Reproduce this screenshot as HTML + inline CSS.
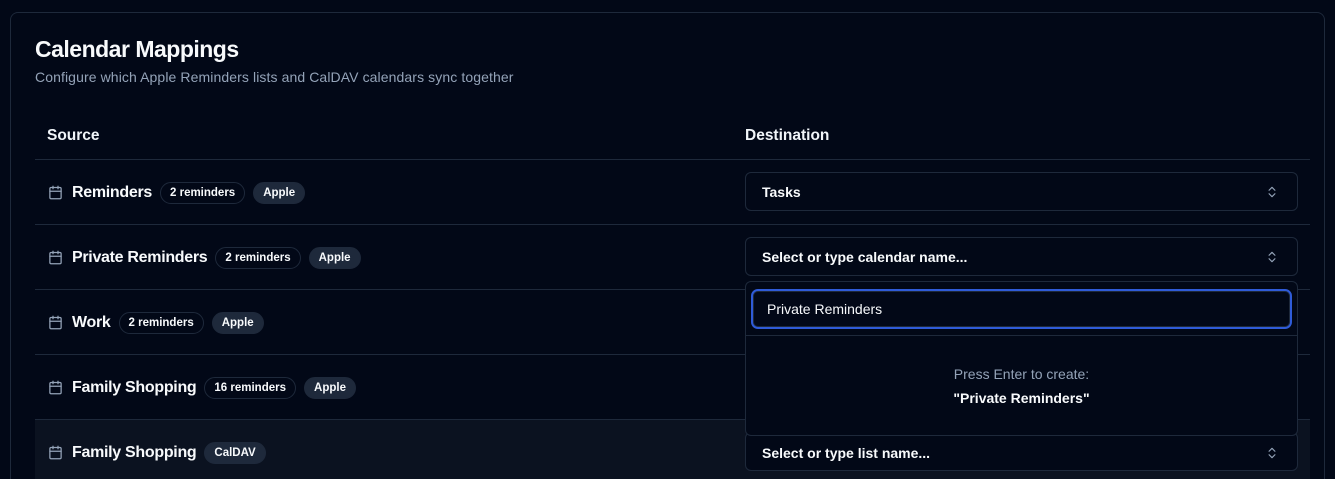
<!DOCTYPE html>
<html><head><style>
*{box-sizing:border-box;margin:0;padding:0}
html,body{width:1335px;height:479px;overflow:hidden}
body{background:#020817;font-family:"Liberation Sans",sans-serif;color:#f8fafc;position:relative}
.card{position:absolute;left:10px;top:12px;width:1315px;height:467px;border:1px solid #1e293b;border-bottom:none;border-radius:8px 8px 0 0}
h1{position:absolute;left:35px;top:36px;font-size:23px;font-weight:700;letter-spacing:-0.5px}
.sub{position:absolute;left:35px;top:69px;font-size:14px;color:#94a3b8;letter-spacing:0.1px}
.th{position:absolute;top:127px;font-size:15.5px;font-weight:700;color:#f1f5f9}
.hr{position:absolute;left:35px;width:1275px;height:1px;background:#1e293b}
.row{position:absolute;left:35px;width:1275px;height:65px;display:flex;align-items:center;padding-left:13px}
.row .nm{font-size:16px;font-weight:700;margin:0 8px 0 9px;letter-spacing:-0.3px}
.b{font-size:11.5px;font-weight:700;border-radius:11px;height:22px;line-height:20px;padding:0 9px;margin-right:8px}
.o{border:1px solid #1e293b}
.f{background:#1e293b;border:1px solid #1e293b}
.sel{position:absolute;left:745px;width:553px;height:39px;border:1px solid #1e293b;border-radius:6px;font-size:14px;font-weight:700;padding:11px 16px;background:#020817}
.chev{position:absolute;right:18px;top:12px}
.dd{position:absolute;left:745px;top:281px;width:553px;height:155px;border:1px solid #1e293b;border-radius:6px;background:#020817}
.inp{position:absolute;left:5px;top:7px;width:541px;height:40px;border:2px solid #2f5bd8;border-radius:7px;font-size:14px;padding:10px 14px;box-shadow:inset 0 0 0 1px #1e293b}
.dhr{position:absolute;left:0;top:53px;width:551px;height:1px;background:#1e293b}
.p1{position:absolute;top:84px;width:551px;text-align:center;font-size:14px;color:#94a3b8}
.p2{position:absolute;top:108px;width:551px;text-align:center;font-size:14px;font-weight:700}
</style></head><body>
<div class="card"></div>
<h1>Calendar Mappings</h1>
<div class="sub">Configure which Apple Reminders lists and CalDAV calendars sync together</div>
<div class="th" style="left:47px">Source</div>
<div class="th" style="left:745px">Destination</div>
<div class="hr" style="top:159px"></div>
<div class="hr" style="top:224px"></div>
<div class="hr" style="top:289px"></div>
<div class="hr" style="top:354px"></div>
<div class="hr" style="top:419px"></div>
<div style="position:absolute;left:35px;top:420px;width:1275px;height:60px;background:#0b1220"></div>
<svg width="0" height="0" style="position:absolute"><defs><symbol id="cal" viewBox="0 0 24 24"><g fill="none" stroke="#94a3b8" stroke-width="2" stroke-linecap="round"><rect x="3" y="4" width="18" height="18" rx="2"/><path d="M16 2v4M8 2v4M3 10h18"/></g></symbol><symbol id="ch" viewBox="0 0 24 24"><path d="M7 15l5 5 5-5M7 9l5-5 5 5" fill="none" stroke="#94a3b8" stroke-width="2" stroke-linecap="round" stroke-linejoin="round"/></symbol></defs></svg>
<div class="row" style="top:160px"><svg width="15" height="15"><use href="#cal"/></svg><span class="nm">Reminders</span><span class="b o">2 reminders</span><span class="b f">Apple</span></div>
<div class="row" style="top:225px"><svg width="15" height="15"><use href="#cal"/></svg><span class="nm">Private Reminders</span><span class="b o">2 reminders</span><span class="b f">Apple</span></div>
<div class="row" style="top:290px"><svg width="15" height="15"><use href="#cal"/></svg><span class="nm">Work</span><span class="b o">2 reminders</span><span class="b f">Apple</span></div>
<div class="row" style="top:355px"><svg width="15" height="15"><use href="#cal"/></svg><span class="nm">Family Shopping</span><span class="b o">16 reminders</span><span class="b f">Apple</span></div>
<div class="row" style="top:420px"><svg width="15" height="15"><use href="#cal"/></svg><span class="nm">Family Shopping</span><span class="b f">CalDAV</span></div>
<div class="sel" style="top:172px">Tasks<svg class="chev" width="14" height="14"><use href="#ch"/></svg></div>
<div class="sel" style="top:237px">Select or type calendar name...<svg class="chev" width="14" height="14"><use href="#ch"/></svg></div>
<div class="sel" style="top:432px;padding-top:12px">Select or type list name...<svg class="chev" width="14" height="14" style="top:13px"><use href="#ch"/></svg></div>
<div class="dd"><div class="inp">Private Reminders</div><div class="dhr"></div><div class="p1">Press Enter to create:</div><div class="p2">"Private Reminders"</div></div>
</body></html>
